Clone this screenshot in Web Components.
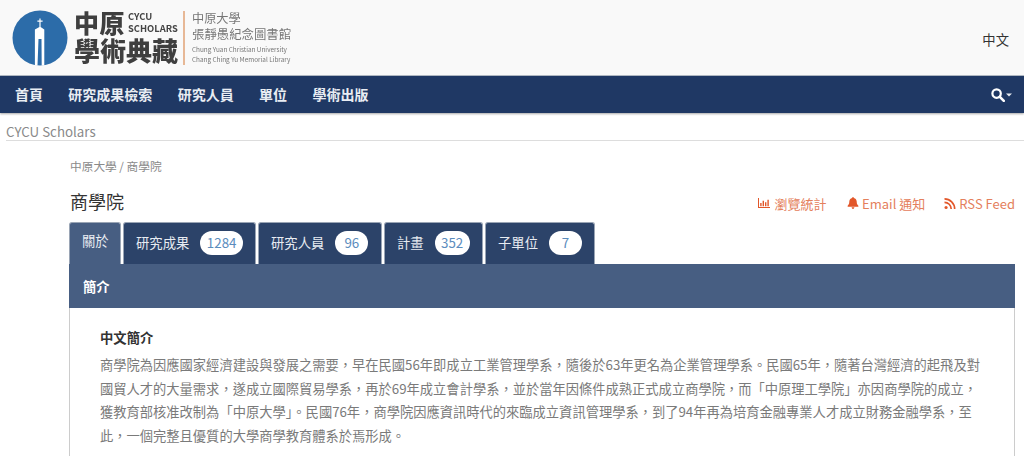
<!DOCTYPE html>
<html lang="zh-Hant"><head><meta charset="utf-8"><title>商學院</title>
<style>
html,body{margin:0;padding:0;height:456px;overflow:hidden;background:#fff}
body{font-family:"Noto Sans CJK TC",sans-serif;font-size:13.33px;color:#333}
</style></head><body>
<site-header></site-header>
<site-nav></site-nav>
<crumb-strip></crumb-strip>
<page-main></page-main>
<script>
function def(name,html){customElements.define(name,class extends HTMLElement{constructor(){super();this.attachShadow({mode:'open'}).innerHTML=html}})}
const CJK='"Noto Sans CJK TC",sans-serif';
def('cycu-logo',`<style>
:host{display:flex;align-items:center;height:75px;padding-left:12px;font-family:${CJK};filter:blur(.35px)}
svg{width:56px;height:56px;display:block;flex:none}
.mid{margin-left:6px;width:104px;display:flex;flex-direction:column;color:#3f3f3f;font-weight:700;padding-bottom:3px}
.top{display:flex;align-items:center;height:26px}
.zy{font-size:25px;line-height:26px;letter-spacing:.5px;font-weight:900}
.en{font-size:9.4px;line-height:12px;margin-left:3px;font-weight:700;white-space:nowrap;color:#444}
.bot{font-size:26px;line-height:29px;font-weight:900;white-space:nowrap}
.bar{width:2px;height:54px;background:#e7b896;margin:0 7px 0 5px;flex:none}
.rt{color:#777;display:flex;flex-direction:column;white-space:nowrap}
.a{font-size:12.2px;line-height:16px}.b{font-size:12.4px;line-height:16px}
.c{font-size:6.4px;line-height:10px;color:#777}.c.f{margin-top:2.5px}
</style>
<svg viewBox="0 0 56 56"><circle cx="28" cy="28" r="27.5" fill="#2c6ca9"/><path fill="#fff" d="M27.400 8.500h1.200v2h2v1.200h-2v5.400l3.700 2.400V55.500h-2.600L29.500 29h-3L25.500 55.500h-2.600V19.500l4.500-2.400v-5.400h-2v-1.200h2z"/></svg>
<div class="mid"><div class="top"><span class="zy">中原</span><span class="en">CYCU<br>SCHOLARS</span></div><div class="bot">學術典藏</div></div>
<div class="bar"></div>
<div class="rt"><span class="a">中原大學</span><span class="b">張靜愚紀念圖書館</span><span class="c f">Chung Yuan Christian University</span><span class="c">Chang Ching Yu Memorial Library</span></div>`);
def('site-header',`<style>
:host{display:flex;justify-content:space-between;align-items:center;height:75px;background:#f9f9f9;border-bottom:1px solid #b4bcc6}
.lang{font-size:13.33px;color:#333;margin-right:15px;padding-top:4px}
</style><cycu-logo></cycu-logo><span class="lang">中文</span>`);
def('nav-link',`<style>:host{display:block;font-size:14px;font-weight:700;color:#e9edf3;padding:0 12.7px;line-height:37px;white-space:nowrap}</style><slot></slot>`);
def('site-nav',`<style>
:host{display:flex;justify-content:space-between;align-items:center;height:37px;padding-left:2.3px;background:#1f3864;box-shadow:0 1px 2px rgba(0,0,0,.35);position:relative}
.l{display:flex}
.s{display:flex;align-items:center;margin-right:12px;gap:1px}
</style><div class="l"><nav-link>首頁</nav-link><nav-link>研究成果檢索</nav-link><nav-link>研究人員</nav-link><nav-link>單位</nav-link><nav-link>學術出版</nav-link></div>
<div class="s"><svg width="14" height="14" viewBox="0 0 14 14"><circle cx="5.600" cy="5.600" r="4.200" fill="none" stroke="#fff" stroke-width="2.200"/><path d="M8.800 8.800l4 4" stroke="#fff" stroke-width="2.600" stroke-linecap="round"/></svg><svg width="6" height="4" viewBox="0 0 6 4"><path d="M0 .5h6L3 3.600z" fill="#e6e9ef"/></svg></div>`);
def('crumb-strip',`<style>:host{display:block;margin:10px 0 0 6px;height:17px;border-bottom:1px solid #ddd;font-size:13.33px;line-height:18px;color:#8a8a8a;white-space:nowrap}</style>CYCU Scholars`);
def('action-link',`<style>:host{display:inline-flex;align-items:center;gap:var(--g,3.5px);font-size:13px;color:#e4805c;white-space:nowrap}svg{display:block}</style><slot name="i"></slot><slot></slot>`);
def('count-pill',`<style>:host{display:inline-block;background:#fff;border-radius:12px;height:24.500px;line-height:24.500px;margin-top:2px;text-align:center;color:#5b8cbd;font-size:13.33px;box-sizing:border-box}</style><slot></slot>`);
def('tab-item',`<style>
:host{display:flex;align-items:center;box-sizing:border-box;height:42px;background:#2c4369;color:#e8ecf2;font-size:13.33px;border:1px solid #9aa5b5;border-bottom:0;border-radius:3px 3px 0 0;padding:0 12px 3px;white-space:nowrap;gap:11px}
:host([active]){background:#475e82;align-items:flex-start;padding-top:8px}
</style><slot></slot>`);
def('tab-bar',`<style>:host{display:flex;gap:2px}</style><slot></slot>`);
def('info-panel',`<style>
:host{display:block}
.h{height:44px;line-height:46px;background:#475e82;color:#fff;font-weight:700;font-size:13.33px;padding-left:14px}
.b{border:1px solid #ccc;border-top:0;padding:18px 30px 20px 30px;background:#fff}
h3{margin:0 0 3px;font-size:13.33px;line-height:24px;font-weight:700;color:#333}
p{margin:0;font-size:13.28px;line-height:23.7px;color:#7a7a7a}
</style><div class="h">簡介</div><div class="b"><h3>中文簡介</h3><p>商學院為因應國家經濟建設與發展之需要，早在民國56年即成立工業管理學系，隨後於63年更名為企業管理學系。民國65年，隨著台灣經濟的起飛及對國貿人才的大量需求，遂成立國際貿易學系，再於69年成立會計學系，並於當年因條件成熟正式成立商學院，而「中原理工學院」亦因商學院的成立，獲教育部核准改制為「中原大學」。民國76年，商學院因應資訊時代的來臨成立資訊管理學系，到了94年再為培育金融專業人才成立財務金融學系，至此，一個完整且優質的大學商學教育體系於焉形成。</p></div>`);
def('page-main',`<style>
:host{display:block;padding:16px 9px 0 69px}
.bc{font-size:11.7px;line-height:18px;color:#8a8a8a;margin-left:1px}
.row{display:flex;justify-content:space-between;align-items:center;height:30px;margin-top:11px;margin-bottom:6px}
h1{margin:0 0 0 1px;font-size:18px;font-weight:400;color:#333;line-height:30px}
.acts{display:flex;padding-top:4px}
</style>
<div class="bc">中原大學 / 商學院</div>
<div class="row"><h1>商學院</h1><div class="acts">
<action-link style="--g:5px;margin-right:20px"><svg slot="i" width="12" height="10" viewBox="0 0 12 10"><path fill="#e2572a" d="M0 0h1v9h11v1H0z"/><path fill="#e2572a" d="M2.200 5h1.400v3.200H2.200zM4.600 2.800H6v5.400H4.600zM7 4.200h1.400v4H7zM9.400 1.800h1.400v6.400H9.400z"/></svg>瀏覽統計</action-link>
<action-link style="margin-right:18.500px"><svg slot="i" width="12" height="12" viewBox="0 0 12 13"><path fill="#e2572a" d="M6 0c.6 0 .9.4.9 1 2 .4 3.100 2 3.100 4 0 3 .9 3.700 1.800 4.600v.9H.2v-.9C1.100 8.700 2 8 2 5c0-2 1.100-3.600 3.100-4 0-.6.3-1 .9-1zM4.500 11.200h3C7.500 12.100 6.800 13 6 13s-1.500-.9-1.500-1.800z"/></svg>Email 通知</action-link>
<action-link><svg slot="i" width="12" height="11" viewBox="0 0 12 12"><circle cx="1.700" cy="10.300" r="1.700" fill="#e2572a"/><path fill="none" stroke="#e2572a" stroke-width="1.800" d="M0 4.700a7.300 7.300 0 0 1 7.300 7.300M0 .9A11.100 11.100 0 0 1 11.100 12"/></svg>RSS Feed</action-link>
</div></div>
<tab-bar>
<tab-item active style="width:52px">關於</tab-item>
<tab-item style="width:133px">研究成果<count-pill style="width:43px">1284</count-pill></tab-item>
<tab-item style="width:124px">研究人員<count-pill style="width:33px">96</count-pill></tab-item>
<tab-item style="width:99px">計畫<count-pill style="width:35px">352</count-pill></tab-item>
<tab-item style="width:110px">子單位<count-pill style="width:33px">7</count-pill></tab-item>
</tab-bar>
<info-panel></info-panel>`);
</script>
</body></html>
